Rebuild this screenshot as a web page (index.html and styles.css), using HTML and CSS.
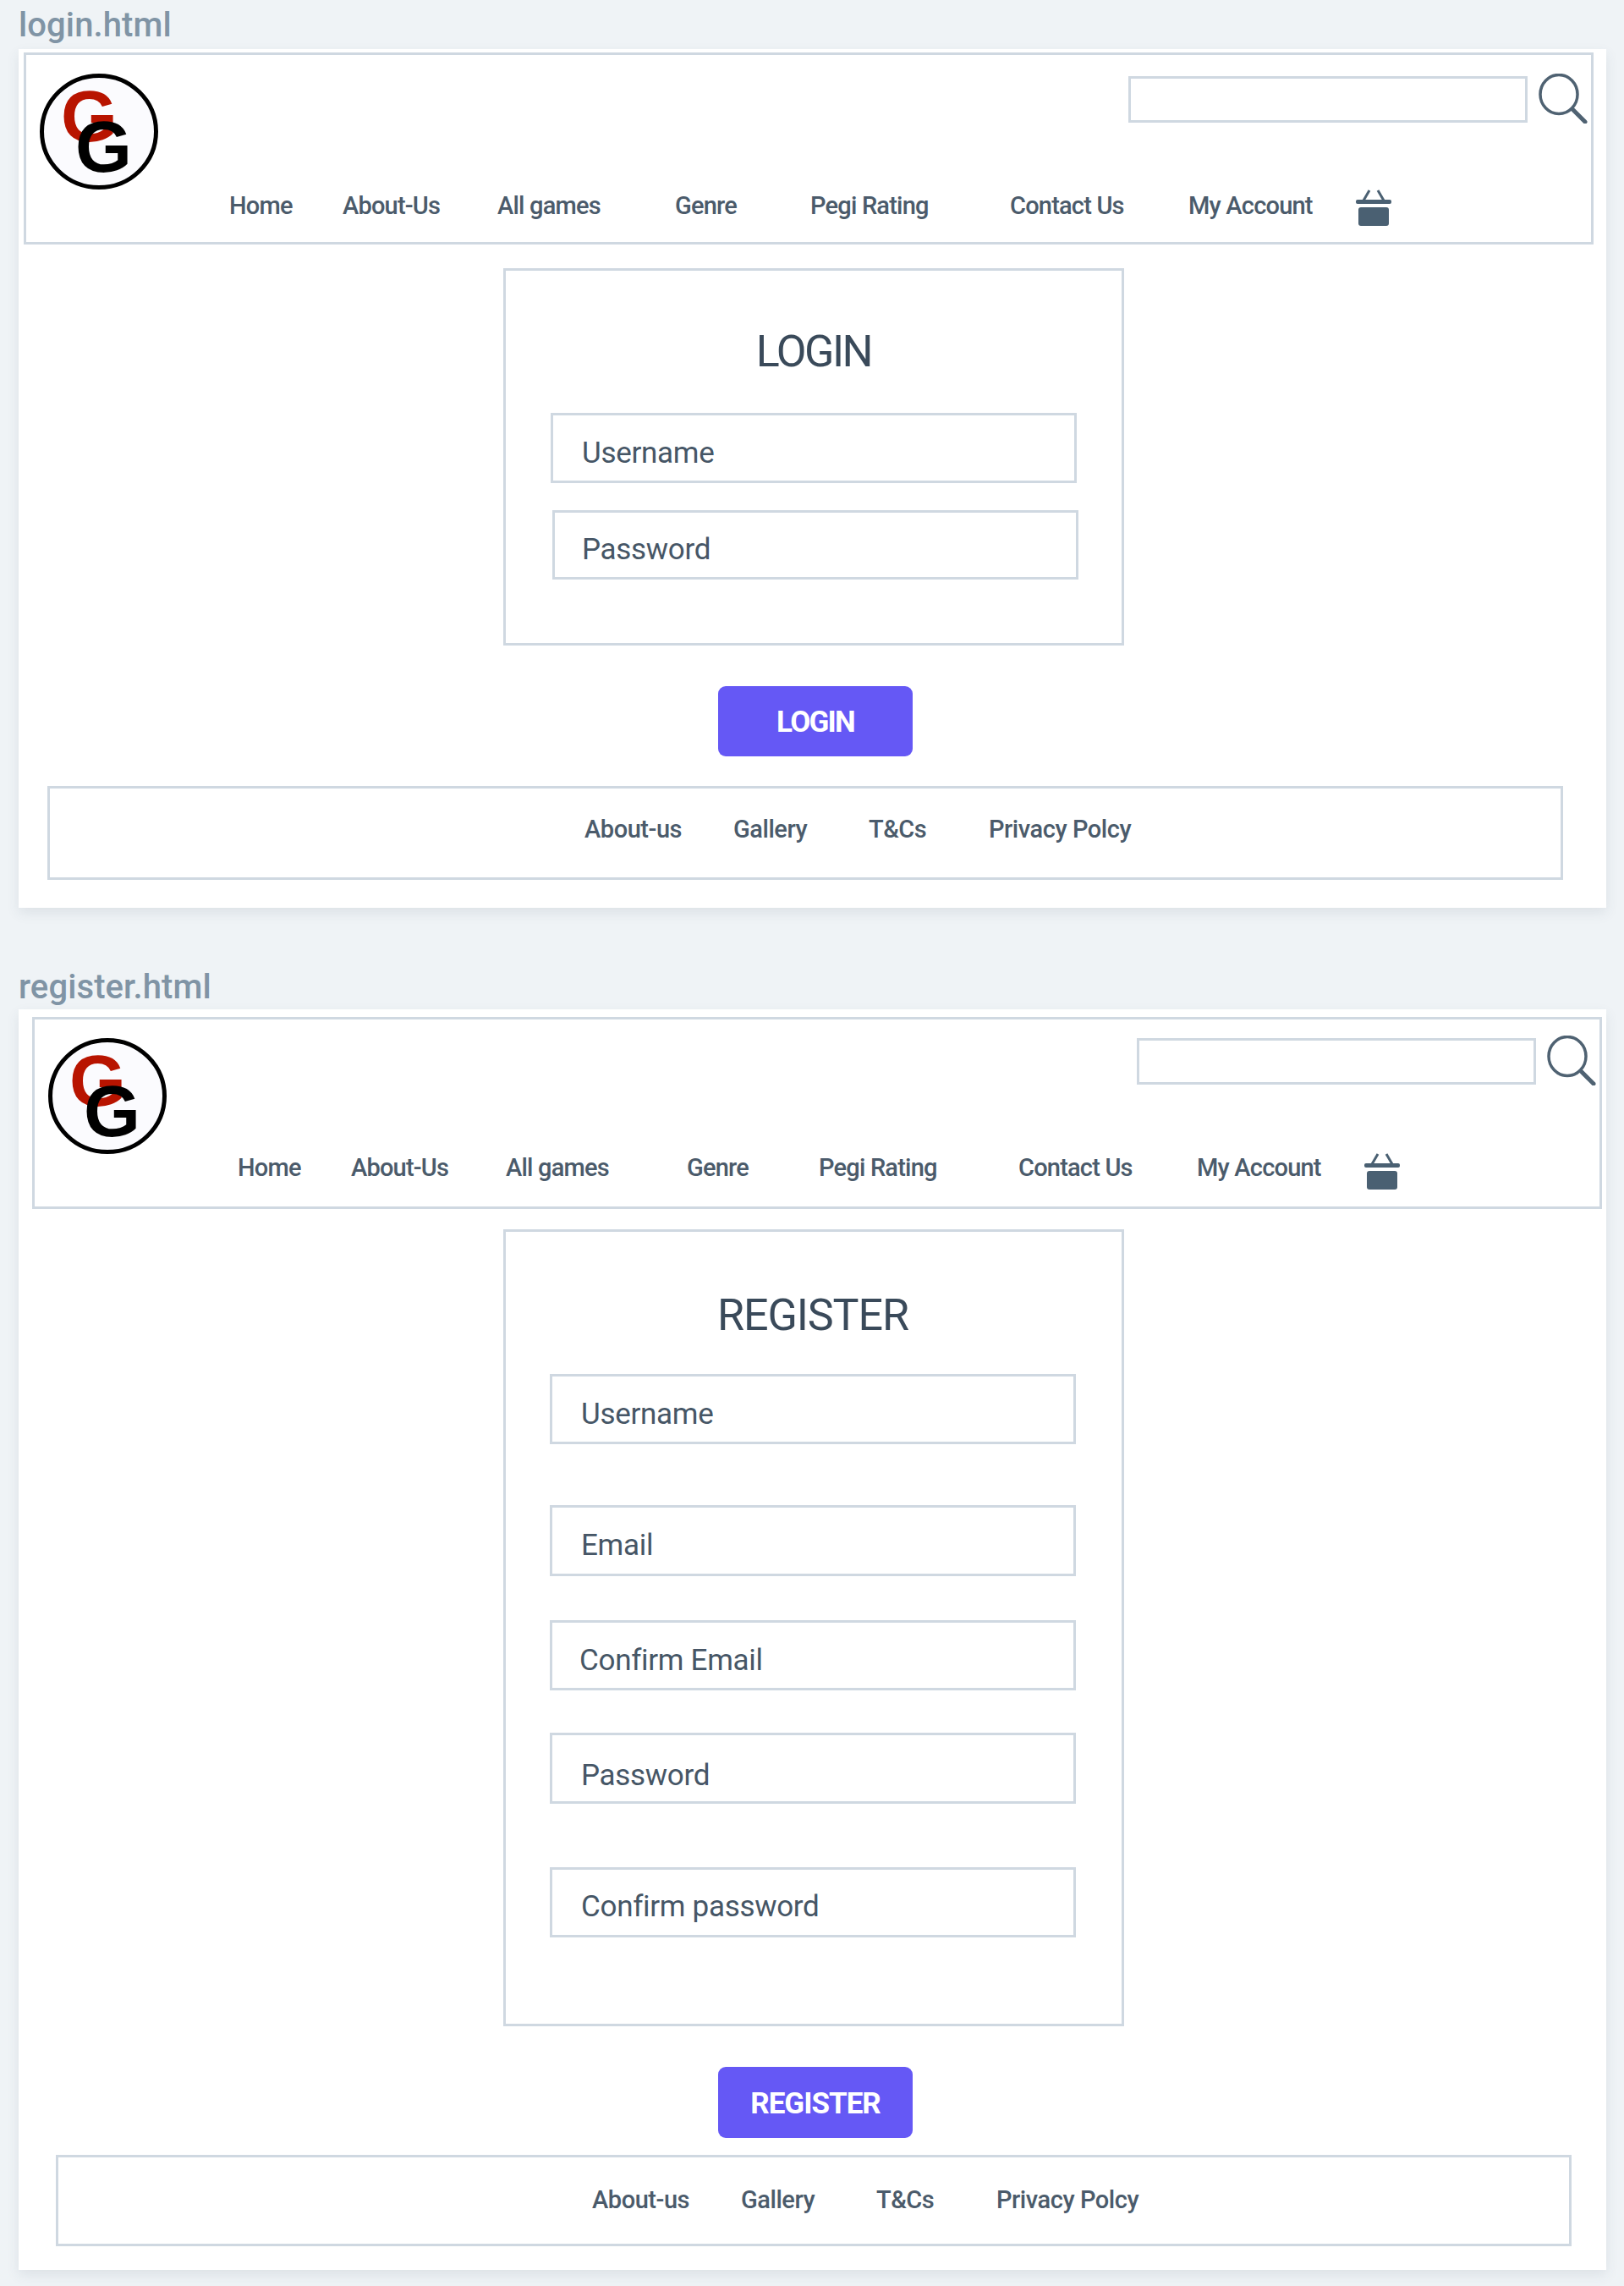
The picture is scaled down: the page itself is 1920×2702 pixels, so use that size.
FILE: index.html
```html
<!DOCTYPE html>
<html lang="en">
<head>
<meta charset="utf-8">
<title>Wireframes</title>
<link rel="stylesheet" href="styles.css">
</head>
<body>
<h2 class="page-label">login.html</h2>
<section class="card card-login">
  <header class="site-head">
    <div class="head-top">
      <svg class="logo" viewBox="0 0 140 137"><ellipse class="logo-ring" cx="70" cy="68.5" rx="67.500" ry="66"/><text class="logo-g logo-red" x="25" y="80">G</text><text class="logo-g logo-black" x="42" y="116">G</text></svg>
      <div class="search">
        <div class="search-box"></div>
        <svg class="search-icon" viewBox="0 0 58 59"><ellipse class="lens" cx="24" cy="24.500" rx="22" ry="23"/><line class="lens-handle" x1="40" y1="42" x2="55" y2="57"/></svg>
      </div>
    </div>
    <nav class="main-nav">
      <a>Home</a><a>About-Us</a><a>All games</a><a>Genre</a><a>Pegi Rating</a><a>Contact Us</a><a>My Account</a>
      <svg class="basket" viewBox="0 0 42 44"><line class="basket-handle" x1="9" y1="13" x2="16" y2="1"/><line class="basket-handle" x1="33" y1="13" x2="26" y2="1"/><rect class="basket-fill" x="0" y="12" width="42" height="5" rx="2"/><rect class="basket-fill" x="3" y="21" width="36" height="22" rx="3"/></svg>
    </nav>
  </header>
  <form class="panel panel-login">
    <h1 class="panel-title title-login">LOGIN</h1>
    <div class="field">Username</div>
    <div class="field">Password</div>
  </form>
  <a class="btn btn-login">LOGIN</a>
  <footer class="site-foot">
    <a>About-us</a><a>Gallery</a><a>T&amp;Cs</a><a>Privacy Polcy</a>
  </footer>
</section>

<h2 class="page-label">register.html</h2>
<section class="card card-register">
  <header class="site-head">
    <div class="head-top">
      <svg class="logo" viewBox="0 0 140 137"><ellipse class="logo-ring" cx="70" cy="68.5" rx="67.500" ry="66"/><text class="logo-g logo-red" x="25" y="80">G</text><text class="logo-g logo-black" x="42" y="116">G</text></svg>
      <div class="search">
        <div class="search-box"></div>
        <svg class="search-icon" viewBox="0 0 58 59"><ellipse class="lens" cx="24" cy="24.500" rx="22" ry="23"/><line class="lens-handle" x1="40" y1="42" x2="55" y2="57"/></svg>
      </div>
    </div>
    <nav class="main-nav">
      <a>Home</a><a>About-Us</a><a>All games</a><a class="genre-shift">Genre</a><a>Pegi Rating</a><a>Contact Us</a><a>My Account</a>
      <svg class="basket" viewBox="0 0 42 44"><line class="basket-handle" x1="9" y1="13" x2="16" y2="1"/><line class="basket-handle" x1="33" y1="13" x2="26" y2="1"/><rect class="basket-fill" x="0" y="12" width="42" height="5" rx="2"/><rect class="basket-fill" x="3" y="21" width="36" height="22" rx="3"/></svg>
    </nav>
  </header>
  <form class="panel panel-register">
    <h1 class="panel-title title-register">REGISTER</h1>
    <div class="field">Username</div>
    <div class="field">Email</div>
    <div class="field">Confirm Email</div>
    <div class="field">Password</div>
    <div class="field">Confirm password</div>
  </form>
  <a class="btn btn-register">REGISTER</a>
  <footer class="site-foot">
    <a>About-us</a><a>Gallery</a><a>T&amp;Cs</a><a>Privacy Polcy</a>
  </footer>
</section>
</body>
</html>
```
FILE: styles.css
```css
* { box-sizing: border-box; }
html, body { margin: 0; padding: 0; }
body {
  height: 2702px;
  overflow: hidden;
  background: #eff3f6;
  padding: 7px 21px 0 22px;
  font-family: Roboto, "Liberation Sans", sans-serif;
  color: #4b5b6b;
}
.page-label {
  margin: 0 0 5px;
  font-size: 40px;
  line-height: 46px;
  font-weight: 500;
  letter-spacing: 0.1px;
  color: #8094a5;
}
.card {
  background: #fff;
  box-shadow: 0 6px 14px rgba(60, 80, 100, 0.1);
}
.card-login { height: 1015px; padding-top: 4px; margin-bottom: 71px; }
.card-register { height: 1490px; padding-top: 9px; margin-top: -2px; }

.site-head {
  width: 1856px;
  height: 227px;
  border: 3px solid #cfd8e1;
}
.card-login .site-head { margin-left: 6px; }
.card-register .site-head { margin-left: 16px; }
.head-top {
  display: flex;
  justify-content: space-between;
  align-items: flex-start;
  height: 138px;
  margin-top: 22px;
  padding: 0 4px 0 16px;
}
.card-register .head-top { height: 135px; }
.card-register .search { margin-top: -3px; }
.logo { width: 140px; height: 137px; overflow: visible; }
.logo-ring { fill: #fbfbfe; stroke: #000; stroke-width: 5; }
.logo-g { font-family: "Liberation Sans", sans-serif; font-weight: 700; font-size: 86px; }
.logo-red { fill: #b81400; }
.logo-black { fill: #000; }
.search { display: flex; align-items: flex-start; gap: 13px; }
.search-box {
  width: 472px;
  height: 55px;
  margin-top: 3px;
  border: 3px solid #cfd8e1;
}
.search-icon { width: 58px; height: 59px; }
.lens { fill: none; stroke: #4f6272; stroke-width: 3.5; }
.lens-handle { stroke: #4f6272; stroke-width: 5; stroke-linecap: round; }

.main-nav {
  display: grid;
  grid-template-columns: 134px 183px 210px 160px 236px 211px 198px 42px;
  align-items: start;
  padding-left: 240px;
  font-size: 29px;
  line-height: 36px;
  font-weight: 500;
  letter-spacing: -0.8px;
  color: #4b5b6b;
}
.genre-shift { margin-left: 4px; }
.basket { width: 42px; height: 44px; margin-top: -1px; }
.card-register .basket { margin-top: 1px; }
.basket-fill { fill: #4a6072; }
.basket-handle { stroke: #4a6072; stroke-width: 3; }

.panel {
  display: flex;
  flex-direction: column;
  width: 734px;
  margin-left: 573px;
  border: 3px solid #cfd8e1;
}
.panel-login { height: 446px; margin-top: 28px; padding: 66px 0 0 53px; }
.panel-register { height: 942px; margin-top: 24px; padding: 69px 0 0 52px; }
.panel-title {
  margin: 0 0 42px;
  width: 622px;
  text-align: center;
  font-size: 52px;
  line-height: 60px;
  font-weight: 400;
  color: #3a4a5a;
}
.title-login { letter-spacing: -2.5px; }
.title-register { letter-spacing: -1.1px; margin-bottom: 39px; }
.field {
  width: 622px;
  height: 83px;
  padding: 25px 0 0 34px;
  border: 3px solid #cfd8e1;
  font-size: 35px;
  line-height: 40px;
  letter-spacing: -0.3px;
  color: #465666;
}
.panel-login .field:nth-child(3) { margin: 32px 0 0 2px; height: 82px; padding: 24px 0 0 32px; }
.panel-register .field:nth-child(3) { margin-top: 72px; height: 84px; }
.panel-register .field:nth-child(4) { margin-top: 52px; padding-left: 32px; }
.panel-register .field:nth-child(5) { margin-top: 50px; height: 84px; padding-top: 28px; }
.panel-register .field:nth-child(6) { margin-top: 75px; padding-top: 24px; }

.btn {
  display: flex;
  align-items: center;
  justify-content: center;
  width: 230px;
  margin: 48px 0 0 827px;
  padding-top: 2px;
  border-radius: 9px;
  background: #6558f5;
  color: #fff;
  font-size: 35px;
  font-weight: 700;
}
.btn-login { height: 83px; letter-spacing: -1.8px; }
.btn-register { height: 84px; letter-spacing: -1px; }

.site-foot {
  display: grid;
  grid-template-columns: 176px 160px 142px auto;
  width: 1792px;
  border: 3px solid #cfd8e1;
  font-size: 29px;
  line-height: 36px;
  font-weight: 500;
  letter-spacing: -0.45px;
  color: #4b5b6b;
}
.card-login .site-foot { height: 111px; margin: 35px 0 0 34px; padding: 30px 0 0 632px; }
.card-register .site-foot { height: 108px; margin: 20px 0 0 44px; padding: 32px 0 0 631px; }
```
